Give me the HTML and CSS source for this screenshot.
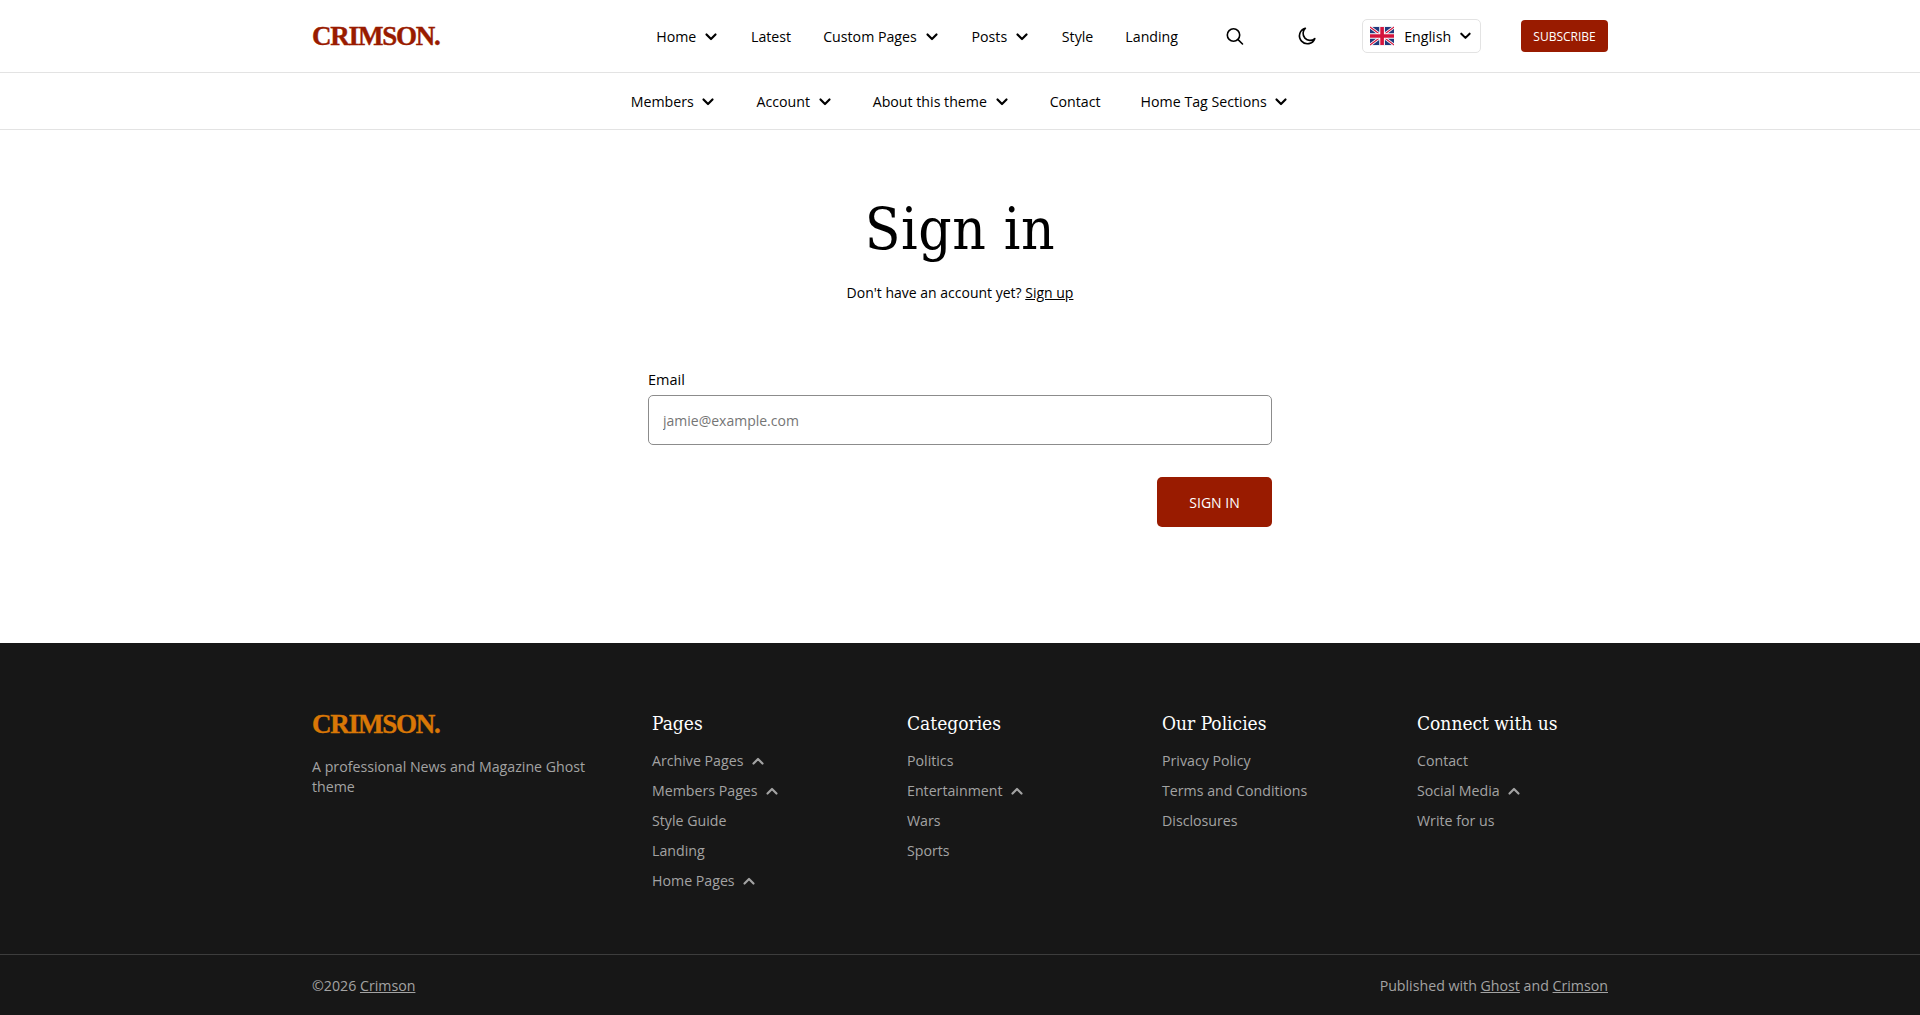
FILE: index.html
```html
<!DOCTYPE html>
<html lang="en">
<head>
    <meta charset="UTF-8">
    <meta name="viewport" content="width=device-width, initial-scale=1.0">
    <title>Sign in - Crimson</title>
    <link rel="stylesheet" href="styles.css">
</head>
<body>
    <svg class="sprite" width="0" height="0">
        <symbol id="chev-down" viewBox="0 0 16 16"><path d="M3.500 5.500 8 10l4.500-4.500" fill="none" stroke="currentColor" stroke-width="2.2" stroke-linecap="round" stroke-linejoin="round"/></symbol>
        <symbol id="chev-up" viewBox="0 0 16 16"><path d="M3.500 10.500 8 6l4.500 4.500" fill="none" stroke="currentColor" stroke-width="2.2" stroke-linecap="round" stroke-linejoin="round"/></symbol>
    </svg>

    <!-- Top bar -->
    <header class="topbar">
        <div class="container topbar-inner">
            <a class="logo" href="#">CRIMSON.</a>
            <nav class="nav">
                <a href="#">Home <svg class="chev"><use href="#chev-down"/></svg></a>
                <a href="#">Latest</a>
                <a href="#">Custom Pages <svg class="chev"><use href="#chev-down"/></svg></a>
                <a href="#">Posts <svg class="chev"><use href="#chev-down"/></svg></a>
                <a href="#">Style</a>
                <a href="#">Landing</a>
            </nav>
            <div class="tools">
                <svg class="tool-icon" viewBox="0 0 20 20" fill="none" stroke="currentColor" stroke-width="1.6" stroke-linecap="round">
                    <circle cx="8.500" cy="9" r="6.200"/>
                    <path d="m13.100 13.600 4.400 4.400"/>
                </svg>
                <svg class="tool-icon" viewBox="0 0 20 20" fill="none" stroke="currentColor" stroke-width="1.6" stroke-linejoin="round">
                    <path d="M8.400 2.200a7.900 7.900 0 1 0 9.400 10.400 6.800 6.800 0 0 1-9.400-10.400Z"/>
                </svg>
            </div>
            <button class="lang">
                <svg class="flag" viewBox="0 0 60 45">
                    <rect width="60" height="45" fill="#1f3a7d"/>
                    <path d="M0 0 60 45M60 0 0 45" stroke="#fff" stroke-width="7"/>
                    <path d="M0 0 60 45M60 0 0 45" stroke="#d4143c" stroke-width="3"/>
                    <path d="M30 0v45M0 22.500h60" stroke="#fff" stroke-width="14"/>
                    <path d="M30 0v45M0 22.500h60" stroke="#d4143c" stroke-width="9"/>
                </svg>
                <span>English</span>
                <svg class="chev"><use href="#chev-down"/></svg>
            </button>
            <a class="subscribe" href="#">SUBSCRIBE</a>
        </div>
    </header>

    <!-- Second nav row -->
    <div class="subbar">
        <nav class="nav">
            <a href="#">Members <svg class="chev"><use href="#chev-down"/></svg></a>
            <a href="#">Account <svg class="chev"><use href="#chev-down"/></svg></a>
            <a href="#">About this theme <svg class="chev"><use href="#chev-down"/></svg></a>
            <a href="#">Contact</a>
            <a href="#">Home Tag Sections <svg class="chev"><use href="#chev-down"/></svg></a>
        </nav>
    </div>

    <!-- Sign in form -->
    <main class="signin">
        <h1>Sign in</h1>
        <p class="signin-note">Don't have an account yet? <a href="#">Sign up</a></p>
        <form class="signin-form">
            <label for="email">Email</label>
            <input id="email" type="email" placeholder="jamie@example.com">
            <button class="signin-btn" type="button">SIGN IN</button>
        </form>
    </main>

    <footer class="footer">
        <div class="container footer-grid">
            <div>
                <a class="logo logo-footer" href="#">CRIMSON.</a>
                <p class="tagline">A professional News and Magazine Ghost theme</p>
            </div>
            <div>
                <h4>Pages</h4>
                <ul>
                    <li>Archive Pages <svg class="chev"><use href="#chev-up"/></svg></li>
                    <li>Members Pages <svg class="chev"><use href="#chev-up"/></svg></li>
                    <li>Style Guide</li>
                    <li>Landing</li>
                    <li>Home Pages <svg class="chev"><use href="#chev-up"/></svg></li>
                </ul>
            </div>
            <div>
                <h4>Categories</h4>
                <ul>
                    <li>Politics</li>
                    <li>Entertainment <svg class="chev"><use href="#chev-up"/></svg></li>
                    <li>Wars</li>
                    <li>Sports</li>
                </ul>
            </div>
            <div>
                <h4>Our Policies</h4>
                <ul>
                    <li>Privacy Policy</li>
                    <li>Terms and Conditions</li>
                    <li>Disclosures</li>
                </ul>
            </div>
            <div>
                <h4>Connect with us</h4>
                <ul>
                    <li>Contact</li>
                    <li>Social Media <svg class="chev"><use href="#chev-up"/></svg></li>
                    <li>Write for us</li>
                </ul>
            </div>
        </div>
        <div class="footer-bottom">
            <div class="container footer-bottom-inner">
                <span>©2026 <a href="#">Crimson</a></span>
                <span>Published with <a href="#">Ghost</a> and <a href="#">Crimson</a></span>
            </div>
        </div>
    </footer>
</body>
</html>
```

FILE: styles.css
```css
:root {
    --crimson: #991b00;
    --line: #e3e3e3;
    --dark: #171717;
    --muted: #a3a3a3;
}

* {
    box-sizing: border-box;
}

body {
    margin: 0;
    font-family: "Open Sans", sans-serif;
    font-size: 14.2px;
    color: #000;
    background: #fff;
}

a {
    color: inherit;
    text-decoration: none;
}

.sprite {
    display: block;
    height: 0;
}

.container {
    width: 1296px;
    margin: 0 auto;
}

.chev {
    width: 16px;
    height: 16px;
    margin-left: 3px;
    vertical-align: -3px;
}

/* Logo */
.logo {
    font-family: "Liberation Serif", serif;
    font-weight: 700;
    font-size: 27px;
    line-height: 24px;
    letter-spacing: -1.2px;
    -webkit-text-stroke: 0.4px currentColor;
    color: var(--crimson);
}

.logo-footer {
    display: block;
    color: #d97706;
}

/* Top bar */
.topbar {
    height: 73px;
    border-bottom: 1px solid var(--line);
}

.topbar-inner {
    height: 72px;
    display: flex;
    align-items: center;
}

.nav {
    display: flex;
    gap: 32px;
    white-space: nowrap;
}

.topbar .nav {
    margin-left: auto;
}

.tools {
    display: flex;
    gap: 52px;
    margin: 0 45px 0 47px;
}

.tool-icon {
    width: 20px;
    height: 20px;
    display: block;
}

.lang {
    display: flex;
    align-items: center;
    width: 119px;
    height: 34px;
    padding: 0 7px;
    background: #fff;
    border: 1px solid var(--line);
    border-radius: 5px;
    font: inherit;
    color: inherit;
}

.lang span {
    margin-left: 10px;
}

.lang .chev {
    margin-left: 7px;
}

.flag {
    width: 26px;
    height: 20px;
}

.subscribe {
    width: 87px;
    height: 32px;
    margin-left: 40px;
    display: flex;
    align-items: center;
    justify-content: center;
    background: var(--crimson);
    color: #fff;
    font-size: 12px;
    border-radius: 4px;
}

/* Second row */
.subbar {
    height: 57px;
    display: flex;
    align-items: center;
    justify-content: center;
    border-bottom: 1px solid var(--line);
}

.subbar .nav {
    gap: 40px;
}

/* Sign in */
.signin {
    height: 513px;
    padding-top: 64px;
    text-align: center;
}

h1 {
    margin: 0;
    font-family: "DejaVu Serif Condensed", "DejaVu Serif", serif;
    font-stretch: condensed;
    font-weight: 400;
    font-size: 58px;
    line-height: 70px;
    letter-spacing: 0.6px;
    color: #000;
}

.signin-note {
    margin: 18px 0 0;
    font-size: 14px;
    line-height: 22px;
}

.signin-note a {
    text-decoration: underline;
}

.signin-form {
    width: 624px;
    margin: 66px auto 0;
    display: flex;
    flex-direction: column;
    text-align: left;
}

.signin-form label {
    font-size: 14.5px;
    line-height: 20px;
    margin-bottom: 5px;
}

.signin-form input {
    height: 50px;
    padding: 0 14px;
    border: 1px solid #8c8c8c;
    border-radius: 5px;
    font: inherit;
    font-size: 14px;
    outline: none;
}

.signin-form input::placeholder {
    color: #757575;
}

.signin-btn {
    align-self: flex-end;
    width: 115px;
    height: 50px;
    margin-top: 32px;
    background: var(--crimson);
    color: #fff;
    border: none;
    border-radius: 5px;
    font: inherit;
    font-size: 14px;
}

/* Footer */
.footer {
    background: var(--dark);
    color: var(--muted);
    height: 372px;
}

.footer-grid {
    height: 311px;
    padding-top: 69px;
    display: grid;
    grid-template-columns: 340px 255px 255px 255px 1fr;
}

.tagline {
    margin: 21px 0 0;
    width: 290px;
    line-height: 20px;
}

.footer h4 {
    margin: -3px 0 9px;
    font-family: "DejaVu Serif Condensed", "DejaVu Serif", serif;
    font-stretch: condensed;
    font-weight: 400;
    font-size: 19px;
    line-height: 28px;
    color: #fff;
}

.footer ul {
    list-style: none;
    margin: 0;
    padding: 0;
}

.footer li {
    height: 30px;
    line-height: 30px;
}

.footer-bottom {
    height: 61px;
    border-top: 1px solid #3d3d3d;
}

.footer-bottom-inner {
    height: 60px;
    display: flex;
    align-items: center;
    justify-content: space-between;
}

.footer-bottom a {
    text-decoration: underline;
}
```
